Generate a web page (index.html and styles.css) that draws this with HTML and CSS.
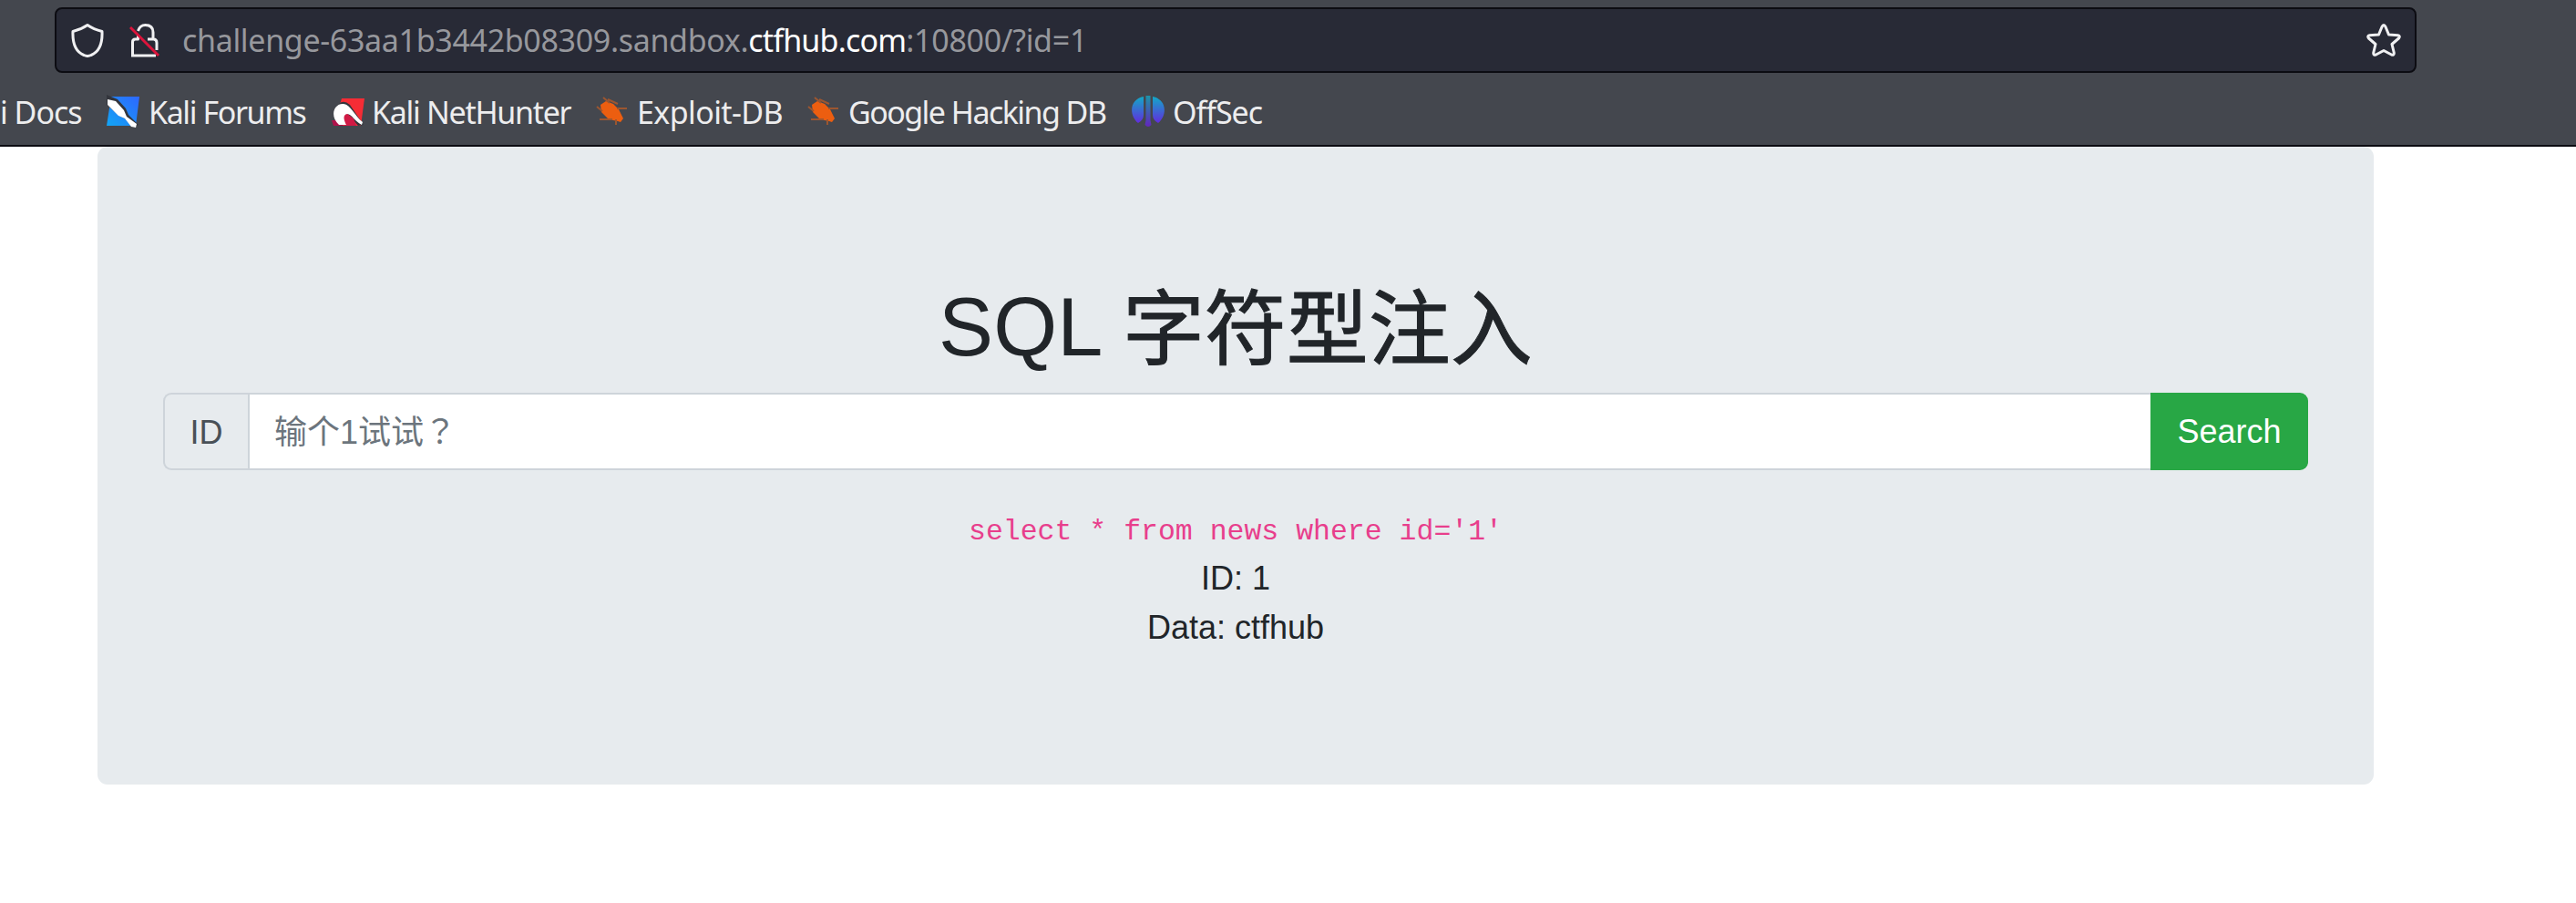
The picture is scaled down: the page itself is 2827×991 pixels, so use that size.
FILE: index.html
```html
<!DOCTYPE html>
<html lang="zh"><head><meta charset="utf-8"><title>CTFHub</title><link rel="stylesheet" href="styles.css"></head>
<body>
<header class="chrome">
  <div class="urlbar">
    <svg class="shield" width="36" height="38" viewBox="0 0 36 38"><path d="M18 2.500C23 6 28 8 34 9.500c.5 12-2 22-12 26q-4 2-8 0c-10-4-12.500-14-12-26C8 8 13 6 18 2.500z"/></svg>
    <svg class="lock" width="36" height="38" viewBox="0 0 36 38"><path d="M9.500 9q2-6.500 8-6.500 8.500 0 8.500 8V18M3.500 36V21q0-3 3-3h3V14M20 18h6.500q3.500 0 3.500 4v8M2 36h27"/><path class="slash" d="M1 5l31 31"/></svg>
    <div class="url"><span class="host">challenge-63aa1b3442b08309.sandbox.</span><span class="domain">ctfhub.com</span><span class="path">:10800/?id=1</span></div>
    <svg class="star" width="38" height="38" viewBox="0 0 38 38"><path d="M17 4.500q2-4 4 0l3.500 8.500 10 .8q3 .7 1 3.200l-7.500 6.500 2.300 9.500q.2 3-2.800 2L19 30.500 10.500 35q-3 1-2.800-2L10 23.500 2.500 17q-2-2.500 1-3.200l10-.8z"/></svg>
  </div>
  <nav class="bookmarks">
    <a class="bm bm-docs"><span>i Docs</span></a>
    <a class="bm bm-forums"><svg width="36" height="36" viewBox="0 0 36 36"><defs><linearGradient id="b" x1="0" y1="1" x2="1" y2="0"><stop offset="0" stop-color="#12a5f4"/><stop offset="1" stop-color="#2e67ff"/></linearGradient></defs><path d="M5 2h31l-4 32H0z" fill="url(#b)"/><path d="M0 0l12 5 9 10 3 7 11 11-6 3-7-9-8-4L0 11z" fill="#33353c"/><path d="M1 5l9 2 9 10 3 7 11 8-1 4-5-1-7-9-7-3L1 11z" fill="#fff"/></svg><span>Kali Forums</span></a>
    <a class="bm bm-net"><svg width="36" height="36" viewBox="0 0 36 36"><path d="M11 4h25l-4 30H2z" fill="#f52c35"/><path d="M8 10q5-5 12 1l15 22-6 1-8-9-9-5z" fill="#33353c"/><path d="M0 28h7l6 6H2z" fill="#b0124b"/><path d="M12 25l4-5 8 6 3 8H14z" fill="#d01a45"/><path d="M8 33C-3 23 3 9 13 10c8 1 12 13 21 20l-1 3c-7-3-11-12-16-12-5 1-4 6-1 12z" fill="#fff"/></svg><span>Kali NetHunter</span></a>
    <a class="bm bm-exp"><svg width="36" height="36" viewBox="0 0 36 36"><path d="M5 11l6-4 8 3 6 6 5 10-3 4-3-1-10-2-8-8z" fill="#ec5e10"/><path d="M8 3l7 6M13 5l11 5M1 13l6 5M23 15h11M4 27h14M22 27v6" stroke="#9c5630" stroke-width="2"/></svg><span>Exploit-DB</span></a>
    <a class="bm bm-ghdb"><svg width="36" height="36" viewBox="0 0 36 36"><path d="M5 11l6-4 8 3 6 6 5 10-3 4-3-1-10-2-8-8z" fill="#ec5e10"/><path d="M8 3l7 6M13 5l11 5M1 13l6 5M23 15h11M4 27h14M22 27v6" stroke="#9c5630" stroke-width="2"/></svg><span>Google Hacking DB</span></a>
    <a class="bm bm-off"><svg width="36" height="36" viewBox="0 0 36 36"><defs><linearGradient id="o" gradientUnits="userSpaceOnUse" x1="0" y1="2" x2="0" y2="34"><stop offset="0" stop-color="#12a9c7"/><stop offset="1" stop-color="#6a1fe0"/></linearGradient></defs><path d="M13 2C-3 5-3 23 7 31q6-3 6-9zM23 2c16 3 16 21 6 29q-6-3-6-9z" fill="url(#o)"/><path d="M15.500 1h5v27l1 5q-3.500 4-7 0l1-5z" fill="url(#o)" opacity=".75"/></svg><span>OffSec</span></a>
  </nav>
</header>
<main class="jumbotron">
  <h1>SQL <span class="cjk">字符型注入</span></h1>
  <form class="group">
    <span class="addon">ID</span>
    <input class="field" type="text" placeholder="输个1试试？" lang="zh-TW">
    <button class="search" type="button">Search</button>
  </form>
  <code>select * from news where id='1'</code>
  <p>ID: 1</p>
  <p>Data: ctfhub</p>
</main>
</body></html>
```
FILE: styles.css
```css
* { box-sizing: border-box; }
body { margin: 0; background: #fff; color: #212529; font: 36px/54px "Liberation Sans", "Noto Sans CJK SC", sans-serif; }
.chrome { height: 161px; background: #44474e; border-bottom: 2px solid #0c0c12; font-family: "Noto Sans", sans-serif; padding-top: 8px; overflow: hidden; }
.urlbar { display: flex; align-items: center; width: 2592px; height: 72px; margin-left: 60px; padding: 0 15px 0 16px; border: 2px solid #0c0c12; border-radius: 8px; background: #282a36; }
.urlbar svg { fill: none; stroke: #f0f0f2; stroke-width: 3; stroke-linejoin: round; flex: none; }
.lock { margin-left: 28px; }
.urlbar .slash { stroke: #dc143c; }
.url { flex: 1; margin-left: 22px; font-size: 34px; color: #97989d; white-space: nowrap; }
.host { letter-spacing: -0.33px; }
.domain { color: #fff; letter-spacing: -0.8px; }
.path { letter-spacing: -0.3px; }
.bookmarks { display: flex; align-items: center; height: 79px; padding-top: 7px; color: #ededee; font-size: 34px; line-height: 48px; white-space: nowrap; }
.bm { display: flex; align-items: center; gap: 10px; flex: none; }
.bm svg { margin-top: -2px; }
.bm-docs { width: 117px; letter-spacing: -1px; }
.bm-forums { width: 247px; letter-spacing: -1.4px; }
.bm-net { width: 290px; gap: 8px; letter-spacing: -1.3px; }
.bm-exp { width: 232px; gap: 9px; letter-spacing: -0.6px; }
.bm-ghdb { width: 356px; gap: 9px; letter-spacing: -1.55px; }
.bm-off { gap: 9px; letter-spacing: -1px; }
.jumbotron { width: 2498px; height: 700px; margin-left: 107px; padding: 144px 72px; background: #e7ebee; border-radius: 11px; text-align: center; }
h1 { margin: 0 0 18px; font-size: 90px; line-height: 108px; font-weight: 400; }
.cjk { position: relative; top: 3px; -webkit-text-stroke: 1px #212529; }
.group { display: flex; height: 85px; margin: 0 0 38px; }
.addon { width: 93px; border: 2px solid #ced4da; border-right: 0; border-radius: 9px 0 0 9px; color: #495057; line-height: 83px; }
.field { flex: 1; min-width: 0; border: 2px solid #ced4da; border-right: 0; padding: 2px 27px 0; font: inherit; font-family: "Liberation Sans", "Noto Sans CJK TC", sans-serif; background: #fff; }
.field::placeholder { color: #6c757d; opacity: 1; }
.search { width: 173px; border: 0; border-radius: 0 9px 9px 0; padding: 1px 0 0; background: #28a745; color: #fff; font: inherit; }
code { display: block; height: 54px; padding-top: 3px; font: 31.5px/54px "Liberation Mono", monospace; color: #e83e8c; }
p { margin: 0; }
```
